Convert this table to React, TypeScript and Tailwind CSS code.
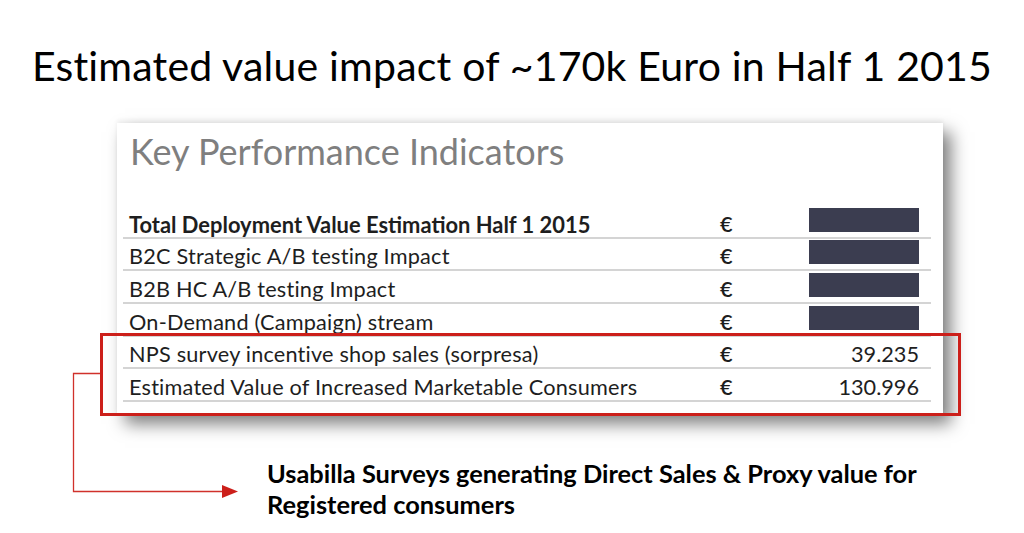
const rows = [
  { label: "Total Deployment Value Estimation Half 1 2015", bold: true, value: null },
  { label: "B2C Strategic A/B testing Impact", value: null },
  { label: "B2B HC A/B testing Impact", value: null },
  { label: "On-Demand (Campaign) stream", value: null },
  { label: "NPS survey incentive shop sales (sorpresa)", value: "39.235" },
  { label: "Estimated Value of Increased Marketable Consumers", value: "130.996" },
];

const KpiRow = ({ label, bold, value }: { label: string; bold?: boolean; value: string | null }) => {
  return (
    <div className="flex h-[32.7px] items-end border-b-2 border-[#d4d4d4] text-[21.7px] leading-[25px] text-[#1e1e1e]">
      <span className={bold ? "w-[597px] pl-[6px] text-[21.9px] font-bold" : "w-[597px] pl-[6px] tracking-[0.2px]"}>{label}</span>
      <span className="w-[30px] font-semibold">€</span>
      {value ? (
        <span className="flex-1 pr-[12px] text-right">{value}</span>
      ) : (
        <div className="ml-[59px] mb-[5px] h-[24px] w-[110px] self-end bg-[#3b3d50]" />
      )}
    </div>
  );
};

const App = () => {
  return (
    <div className="relative h-[533px] w-[1024px] overflow-hidden bg-white font-['Lato','Noto_Sans',sans-serif]">
      <h1 className="pt-[41px] text-center text-[41px] leading-[50px] tracking-[0.2px] text-black">
        Estimated value impact of ~170k Euro in Half 1 2015
      </h1>

      <div className="ml-[117px] mt-[32px] h-[292px] w-[826px] bg-white px-[6px] shadow-[8px_9px_16px_rgba(0,0,0,0.5),0_-3px_4px_rgba(0,0,0,0.05)]">
        <div className="h-[83px] pl-[7px] pt-[6px] text-[36px] leading-[44px] text-[#7f7f7f]">
          Key Performance Indicators
        </div>
        <div className="w-[808px]">
          {rows.map((row) => (
            <KpiRow key={row.label} label={row.label} bold={row.bold} value={row.value} />
          ))}
        </div>
      </div>

      <p className="ml-[267px] mt-[43px] text-[25.4px] font-bold leading-[31px] text-black">
        Usabilla Surveys generating Direct Sales &amp; Proxy value for
        <br />
        Registered consumers
      </p>

      {/* highlight box + connector arrow */}
      <div className="absolute left-[100px] top-[333px] h-[83px] w-[861px] border-[3px] border-[#cc1f1a]" />
      <svg className="absolute left-0 top-0" width="1024" height="533">
        <polyline points="100,373.5 73.5,373.5 73.5,491.5 224,491.5" fill="none" stroke="#d0312b" strokeWidth="1.3" />
        <polygon points="222,485 238,491.5 222,498" fill="#cc1f1a" />
      </svg>
    </div>
  );
};

export default App;
